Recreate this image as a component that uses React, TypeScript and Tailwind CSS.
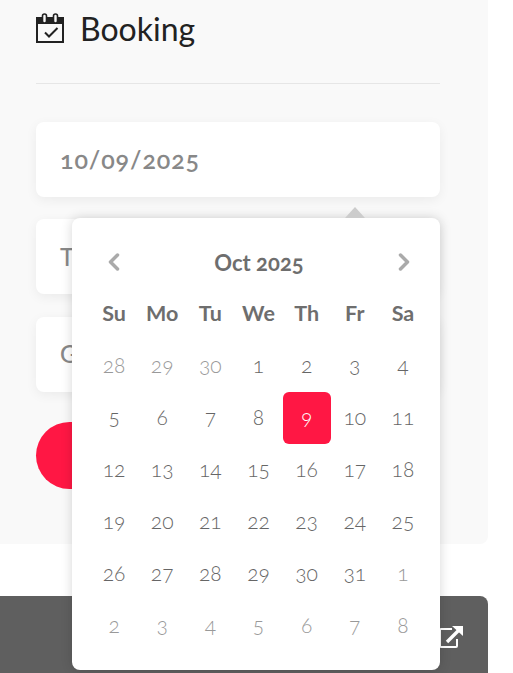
import React from 'react';
import { ChevronLeft, ChevronRight } from 'lucide-react';

const days = ['Su', 'Mo', 'Tu', 'We', 'Th', 'Fr', 'Sa'];

// muted = day belongs to the previous or next month
const dates = [
  ...[28, 29, 30].map((d) => ({ d, muted: true })),
  ...Array.from({ length: 31 }, (_, i) => ({ d: i + 1, muted: false })),
  ...[1, 2, 3, 4, 5, 6, 7, 8].map((d) => ({ d, muted: true })),
];

const CalendarCheck = () => (
  <svg width="28" height="30" viewBox="0 0 28 30" fill="none">
    <rect x="1" y="5" width="26" height="24" stroke="#222" strokeWidth="2" />
    <rect x="1" y="5" width="26" height="6" fill="#222" />
    <rect x="6.5" y="1" width="4" height="9" rx="2" fill="#f9f9f9" stroke="#222" strokeWidth="1.6" />
    <rect x="17.5" y="1" width="4" height="9" rx="2" fill="#f9f9f9" stroke="#222" strokeWidth="1.6" />
    <path d="M9 19.5l4 4 8.5-8.5" stroke="#222" strokeWidth="2" />
  </svg>
);

const OpenLink = () => (
  <svg width="26" height="24" viewBox="0 0 26 24" fill="none">
    <path d="M14 4H3a1 1 0 0 0-1 1v16a1 1 0 0 0 1 1h15a1 1 0 0 0 1-1v-7" stroke="#fff" strokeWidth="2" />
    <path d="M9 17L21 5" stroke="#fff" strokeWidth="3.4" />
    <path d="M14 1h11v10z" fill="#fff" />
  </svg>
);

const Field = ({ label, bold }: { label: string; bold?: boolean }) => (
  <div
    className={`flex h-[75px] items-center rounded-lg bg-white pl-6 text-[#888] shadow-[0_3px_12px_rgba(0,0,0,0.06)] ${
      bold ? 'text-[25px] font-semibold tracking-[0.9px] oldstyle-nums' : 'text-[24px] font-medium'
    }`}
  >
    {label}
  </div>
);

const DatePicker = () => (
  <div className="absolute left-[72px] top-[218px] w-[368px] rounded-lg bg-white pb-[18px] pl-[18px] pr-[13px] text-[#777] shadow-[0_0_12px_rgba(0,0,0,0.16)]">
    <div className="absolute -top-[11px] left-[273px] h-0 w-0 border-x-[10px] border-b-[11px] border-x-transparent border-b-[#ccc]" />
    <div className="flex h-[78px] items-center justify-between pl-[10px] pr-[9px] pt-[10px]">
      <ChevronLeft className="h-7 w-7 text-[#aaa]" strokeWidth={3} />
      <span className="text-[22px] font-bold text-[#6e6e6e] oldstyle-nums">Oct 2025</span>
      <ChevronRight className="h-7 w-7 text-[#aaa]" strokeWidth={3} />
    </div>
    <div className="grid h-[44px] grid-cols-7 items-start text-center text-[21.5px] font-bold text-[#6e6e6e]">
      {days.map((day) => (
        <span key={day} className="leading-[34px]">{day}</span>
      ))}
    </div>
    <div className="grid grid-cols-7 text-[21px] font-light oldstyle-nums">
      {dates.map(({ d, muted }, i) => (
        <div
          key={i}
          className={`flex h-[52px] items-center justify-center rounded-md pb-[3px] ${
            d === 9 && !muted ? 'bg-[#ff1744] text-white' : muted ? 'text-[#999]' : 'text-[#666]'
          }`}
        >
          {d}
        </div>
      ))}
    </div>
  </div>
);

const App = () => {
  return (
    <div className="relative h-[673px] overflow-hidden bg-white font-['Lato','Liberation_Sans',sans-serif]">
      <div className="h-[544px] w-[488px] rounded-br-lg bg-[#f9f9f9] pl-9 pr-12">
        <div className="flex h-[84px] items-start gap-[16px] border-b border-[#e6e6e6] pt-[11px]">
          <span className="pt-[2px]">
            <CalendarCheck />
          </span>
          <h2 className="text-[32px] leading-[36px] text-[#222]">Booking</h2>
        </div>
        <div className="mt-[38px] flex flex-col gap-[22.4px]">
          <Field label="10/09/2025" bold />
          <Field label="Time" />
          <Field label="Guests" />
          <div className="mt-[7.8px] h-[67px] w-[240px] rounded-full bg-[#ff1744]" />
        </div>
      </div>
      <div className="mt-[52px] flex h-[77px] w-[488px] flex-col overflow-hidden rounded-tr-lg bg-[#5f5f5f] text-white">
        <div className="flex justify-end pr-[24px] pt-[29px]">
          <OpenLink />
        </div>
        <div className="mt-[19px] text-center text-[27px] font-bold leading-none">CHECK AVAILABILITY</div>
      </div>
      <DatePicker />
    </div>
  );
};

export default App;
